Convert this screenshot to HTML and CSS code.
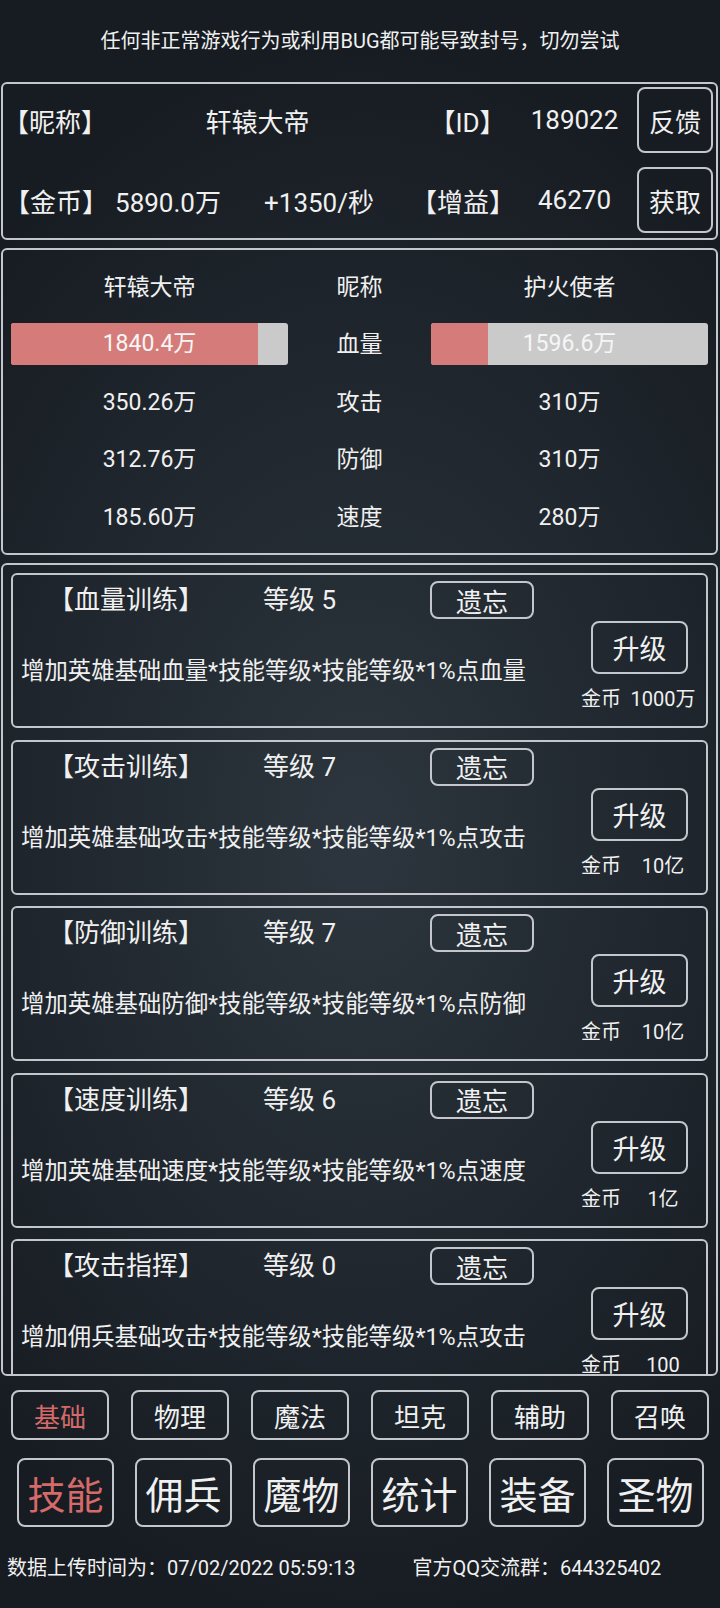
FILE: index.html
```html
<!DOCTYPE html>
<html lang="zh-CN">
<head>
    <meta charset="UTF-8">
    <title>技能</title>
    <link rel="stylesheet" href="styles.css">
</head>
<body>
    <div class="notice">任何非正常游戏行为或利用BUG都可能导致封号，切勿尝试</div>

    <!-- player info -->
    <div class="panel info">
        <div class="info-row row-a">
            <span>【昵称】</span>
            <span>轩辕大帝</span>
            <span>【ID】</span>
            <span>189022</span>
            <button class="btn info-btn">反馈</button>
        </div>
        <div class="info-row row-b">
            <span>【金币】</span>
            <span>5890.0万</span>
            <span>+1350/秒</span>
            <span>【增益】</span>
            <span class="gain">46270</span>
            <button class="btn info-btn">获取</button>
        </div>
    </div>

    <!-- battle compare -->
    <div class="panel compare">
        <div>轩辕大帝</div>
        <div>昵称</div>
        <div>护火使者</div>

        <div class="hp"><div class="hp-fill" style="width: 89%"></div><span>1840.4万</span></div>
        <div>血量</div>
        <div class="hp"><div class="hp-fill" style="width: 20.6%"></div><span>1596.6万</span></div>

        <div>350.26万</div>
        <div>攻击</div>
        <div>310万</div>

        <div>312.76万</div>
        <div>防御</div>
        <div>310万</div>

        <div>185.60万</div>
        <div>速度</div>
        <div>280万</div>
    </div>

    <!-- skill list -->
    <div class="panel skills">
        <div class="card">
            <div class="card-main">
                <div class="card-head">
                    <span class="skill-name">【血量训练】</span>
                    <span class="skill-level">等级 5</span>
                    <button class="btn forget">遗忘</button>
                </div>
                <div class="skill-desc">增加英雄基础血量*技能等级*技能等级*1%点血量</div>
            </div>
            <div class="card-side">
                <button class="btn upgrade">升级</button>
                <div class="price"><span>金币</span><span class="price-val">1000万</span></div>
            </div>
        </div>

        <div class="card">
            <div class="card-main">
                <div class="card-head">
                    <span class="skill-name">【攻击训练】</span>
                    <span class="skill-level">等级 7</span>
                    <button class="btn forget">遗忘</button>
                </div>
                <div class="skill-desc">增加英雄基础攻击*技能等级*技能等级*1%点攻击</div>
            </div>
            <div class="card-side">
                <button class="btn upgrade">升级</button>
                <div class="price"><span>金币</span><span class="price-val">10亿</span></div>
            </div>
        </div>

        <div class="card">
            <div class="card-main">
                <div class="card-head">
                    <span class="skill-name">【防御训练】</span>
                    <span class="skill-level">等级 7</span>
                    <button class="btn forget">遗忘</button>
                </div>
                <div class="skill-desc">增加英雄基础防御*技能等级*技能等级*1%点防御</div>
            </div>
            <div class="card-side">
                <button class="btn upgrade">升级</button>
                <div class="price"><span>金币</span><span class="price-val">10亿</span></div>
            </div>
        </div>

        <div class="card">
            <div class="card-main">
                <div class="card-head">
                    <span class="skill-name">【速度训练】</span>
                    <span class="skill-level">等级 6</span>
                    <button class="btn forget">遗忘</button>
                </div>
                <div class="skill-desc">增加英雄基础速度*技能等级*技能等级*1%点速度</div>
            </div>
            <div class="card-side">
                <button class="btn upgrade">升级</button>
                <div class="price"><span>金币</span><span class="price-val">1亿</span></div>
            </div>
        </div>

        <div class="card">
            <div class="card-main">
                <div class="card-head">
                    <span class="skill-name">【攻击指挥】</span>
                    <span class="skill-level">等级 0</span>
                    <button class="btn forget">遗忘</button>
                </div>
                <div class="skill-desc">增加佣兵基础攻击*技能等级*技能等级*1%点攻击</div>
            </div>
            <div class="card-side">
                <button class="btn upgrade">升级</button>
                <div class="price"><span>金币</span><span class="price-val">100</span></div>
            </div>
        </div>
    </div>

    <!-- skill categories -->
    <div class="tabs">
        <button class="btn tab active">基础</button>
        <button class="btn tab">物理</button>
        <button class="btn tab">魔法</button>
        <button class="btn tab">坦克</button>
        <button class="btn tab">辅助</button>
        <button class="btn tab">召唤</button>
    </div>

    <!-- main menu -->
    <div class="menu">
        <button class="btn menu-btn active">技能</button>
        <button class="btn menu-btn">佣兵</button>
        <button class="btn menu-btn">魔物</button>
        <button class="btn menu-btn">统计</button>
        <button class="btn menu-btn">装备</button>
        <button class="btn menu-btn">圣物</button>
    </div>

    <div class="footer">
        <span>数据上传时间为：07/02/2022 05:59:13</span>
        <span>官方QQ交流群：644325402</span>
    </div>
</body>
</html>
```

FILE: styles.css
```css
/* page */
html {
    background: #181e24;
}

body {
    margin: 0;
    width: 720px;
    height: 1608px;
    overflow: hidden;
    color: #f0f0f0;
    font-family: Roboto, "Noto Sans CJK SC", sans-serif;
    background: radial-gradient(ellipse 75% 50% at 50% 52%, #2d363e 0%, #20272e 55%, #171c22 100%);
}

button {
    font-family: inherit;
}

/* outlined box used by every button */
.btn {
    background: transparent;
    color: #f0f0f0;
    border: 2px solid #c3c7cb;
    border-radius: 8px;
    padding: 0;
    box-sizing: border-box;
    display: flex;
    align-items: center;
    justify-content: center;
}

.panel {
    margin: 0 2px 0 1px;
    border: 2px solid #c3c7cb;
    border-radius: 6px;
    box-sizing: border-box;
}

/* warning line */
.notice {
    height: 82px;
    line-height: 82px;
    font-size: 20px;
    text-align: center;
}

/* player info */
.info {
    height: 158px;
    padding: 3px 3px 5px 0;
    display: flex;
    flex-direction: column;
    gap: 14px;
    font-size: 26px;
}

.info-row {
    height: 66px;
    display: grid;
    align-items: center;
    text-align: center;
}

.row-a {
    grid-template-columns: 100px 309px 111px 103px 1fr;
}

.row-b {
    grid-template-columns: 106px 118px 184px 93px 133px 1fr;
}

.gain {
    padding-left: 8px;
}

.info-btn {
    width: 76px;
    height: 66px;
    font-size: 26px;
    justify-self: end;
}

/* compare table */
.compare {
    margin-top: 8px;
    height: 307px;
    padding: 6px 8px 0 8px;
    display: grid;
    grid-template-columns: 277px 1fr 277px;
    grid-auto-rows: 57.5px;
    align-items: center;
    text-align: center;
    font-size: 23px;
}

.hp {
    position: relative;
    margin-top: 4px;
    height: 42px;
    background: #cacaca;
    border-radius: 3px;
    overflow: hidden;
}

.hp-fill {
    height: 100%;
    background: #d57c7a;
}

.hp span {
    position: absolute;
    left: 0;
    right: 0;
    top: 0;
    line-height: 42px;
    color: #f6f6f6;
}

/* skill list */
.skills {
    margin-top: 8px;
    height: 813px;
    padding: 8px 8px 0 8px;
    overflow: hidden;
}

.card {
    height: 155px;
    margin-bottom: 11.5px;
    border: 2px solid #c3c7cb;
    border-radius: 6px;
    box-sizing: border-box;
    display: flex;
}

.card-main {
    width: 568px;
}

.card-head {
    margin-top: 6px;
    height: 38px;
    display: flex;
    align-items: center;
    font-size: 26px;
}

.skill-name {
    margin-left: 35px;
    margin-bottom: 5px;
    width: 215px;
}

.skill-level {
    margin-bottom: 5px;
    width: 167px;
}

.forget {
    width: 104px;
    height: 38px;
    font-size: 26px;
}

.skill-desc {
    margin-top: 36px;
    padding-left: 8px;
    line-height: 32px;
    font-size: 23.4px;
    white-space: nowrap;
}

.card-side {
    flex: 1;
    padding-top: 46px;
}

.upgrade {
    margin-left: 10px;
    width: 97px;
    height: 53px;
    font-size: 27px;
}

.price {
    margin-top: 13px;
    display: flex;
    line-height: 24px;
    font-size: 20px;
}

.price-val {
    width: 84px;
    text-align: center;
}

/* categories */
.tabs {
    margin: 14px 0 0 11px;
    display: flex;
    gap: 22px;
}

.tab {
    width: 98px;
    height: 50px;
    font-size: 26px;
}

.active {
    color: #d56a69;
}

.menu {
    margin: 18px 0 0 17px;
    display: flex;
    gap: 21px;
}

.menu-btn {
    width: 97px;
    height: 69px;
    font-size: 38px;
}

/* footer */
.footer {
    margin-top: 26px;
    padding-left: 7px;
    line-height: 30px;
    font-size: 20px;
    display: flex;
    gap: 57px;
    white-space: nowrap;
}
```
